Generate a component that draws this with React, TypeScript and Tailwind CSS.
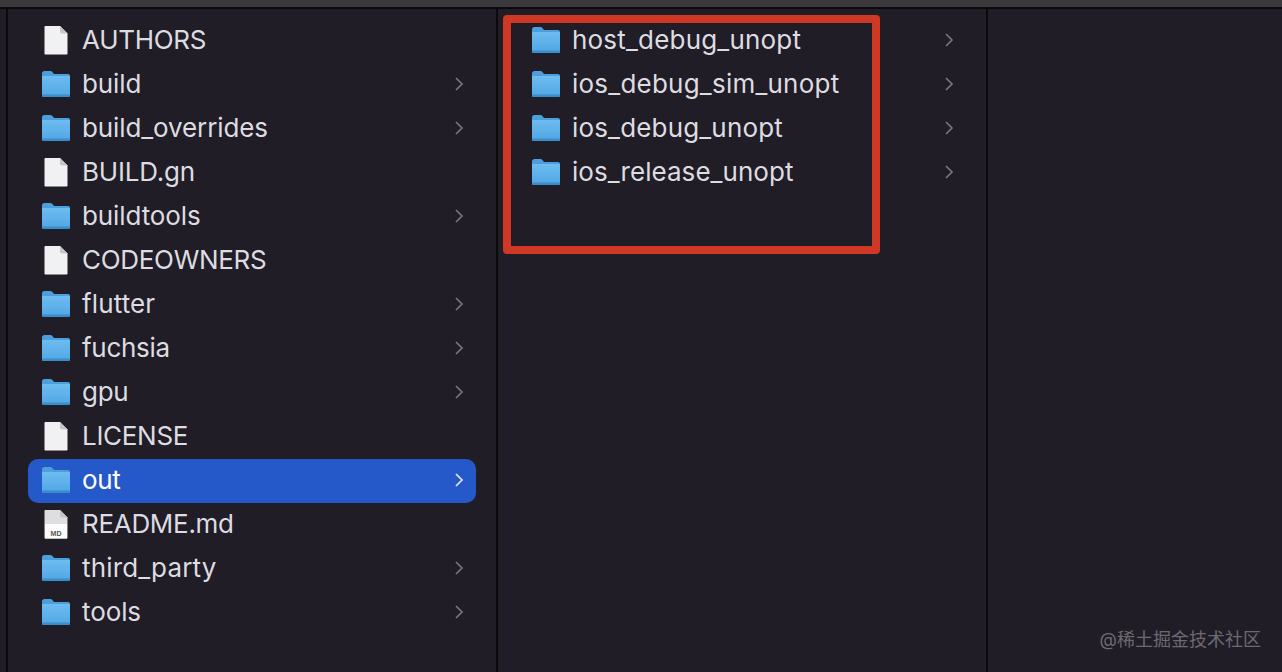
import React from "react";

const font = { fontFamily: '"Inter", "Noto Sans CJK SC", sans-serif' };

function Folder({ id }: { id: string }) {
  return (
    <svg width="30" height="28" viewBox="0 0 30 28" className="shrink-0">
      <defs>
        <linearGradient id={id} x1="0" y1="0" x2="0" y2="1">
          <stop offset="0" stopColor="#6ebcf0" />
          <stop offset="1" stopColor="#4fa6e4" />
        </linearGradient>
      </defs>
      <path d="M1 3.500C1 2 2 1 3.500 1h5.500c1.200 0 1.800.4 2.600 1.200L13 4h14c1.200 0 2 .8 2 2v19c0 1.200-.8 2-2 2H3c-1.200 0-2-.8-2-2z" fill="#4c9fdc" />
      <path d="M1 7c0-.6.4-1 1-1h26c.6 0 1 .4 1 1v18c0 1.200-.8 2-2 2H3c-1.200 0-2-.8-2-2z" fill={`url(#${id})`} />
      <rect x="1" y="24.500" width="28" height="2.500" rx="1.200" fill="#3a8ccb" />
    </svg>
  );
}

function Doc({ md }: { md?: boolean }) {
  return (
    <svg width="30" height="30" viewBox="0 0 30 30" className="shrink-0">
      <path d="M3.500 2C3.500 1.400 4 1 4.500 1H19l7.500 7.500v20c0 .6-.5 1-1 1H4.500c-.6 0-1-.4-1-1z" fill={md ? "#dedee0" : "#f1f1f3"} />
      {md && <rect x="4" y="15" width="22" height="14.500" fill="#fbfbfb" />}
      <path d="M19 1V6.500c0 1.200.8 2 2 2h5.500z" fill="#c6c6ca" />
      {md && (
        <text x="15" y="27" textAnchor="middle" fontSize="7" fontWeight="700" fill="#555" fontFamily="Liberation Sans, sans-serif">
          MD
        </text>
      )}
    </svg>
  );
}

function Chevron({ white }: { white?: boolean }) {
  return (
    <svg width="10" height="16" viewBox="0 0 10 16" className="shrink-0">
      <path d="M2 2l6 6-6 6" fill="none" stroke={white ? "#e6e9f5" : "#77767c"} strokeWidth="1.700" />
    </svg>
  );
}

type Item = { name: string; kind: "folder" | "doc" | "md"; selected?: boolean; track: string };

const first: Item[] = [
  { name: "AUTHORS", kind: "doc", track: "tracking-[-0.3px]" },
  { name: "build", kind: "folder", track: "tracking-[-0.1px]" },
  { name: "build_overrides", kind: "folder", track: "tracking-[-0.1px]" },
  { name: "BUILD.gn", kind: "doc", track: "tracking-[-0.2px]" },
  { name: "buildtools", kind: "folder", track: "tracking-[-0.1px]" },
  { name: "CODEOWNERS", kind: "doc", track: "tracking-[-0.3px]" },
  { name: "flutter", kind: "folder", track: "tracking-[0.13px]" },
  { name: "fuchsia", kind: "folder", track: "tracking-[-0.3px]" },
  { name: "gpu", kind: "folder", track: "tracking-[-0.3px]" },
  { name: "LICENSE", kind: "doc", track: "tracking-[-0.3px]" },
  { name: "out", kind: "folder", selected: true, track: "tracking-[-0.3px]" },
  { name: "README.md", kind: "md", track: "tracking-[-0.3px]" },
  { name: "third_party", kind: "folder", track: "tracking-[0.15px]" },
  { name: "tools", kind: "folder", track: "tracking-[-0.1px]" },
];

const second: Item[] = [
  { name: "host_debug_unopt", kind: "folder", track: "tracking-[0.2px]" },
  { name: "ios_debug_sim_unopt", kind: "folder", track: "tracking-[0.23px]" },
  { name: "ios_debug_unopt", kind: "folder", track: "tracking-[0.17px]" },
  { name: "ios_release_unopt", kind: "folder", track: "tracking-[0.05px]" },
];

function Row({ item, id }: { item: Item; id: string }) {
  return (
    <div
      className={`flex h-[44px] items-center rounded-[10px] pl-[13px] pr-[12px] ${
        item.selected ? "mt-[1px] mb-[-1px] pb-[2px] bg-[#2558c8] text-white" : "text-[#dddce0]"
      }`}
    >
      <span className="flex w-[30px] items-center justify-center">
        {item.kind === "folder" ? <Folder id={id} /> : <Doc md={item.kind === "md"} />}
      </span>
      <span className={`ml-[11px] flex-1 text-[26px] leading-[42px] ${item.track}`}>{item.name}</span>
      {item.kind === "folder" && <Chevron white={item.selected} />}
    </div>
  );
}

export default function App() {
  return (
    <div className="relative flex h-[672px] w-[1282px] flex-col overflow-hidden bg-[#201d26]" style={font}>
      <div className="h-[7px] shrink-0 bg-[#3b393d]" />
      <div className="h-[2px] shrink-0 bg-[#0a0a0b]" />
      <div className="flex min-h-0 flex-1">
        <div className="w-[6px] shrink-0" />
        <div className="w-[2px] shrink-0 bg-[#0a0a0b]" />
        <div className="flex w-[488px] shrink-0 flex-col px-[20px] pt-[9px]">
          {first.map((it, i) => (
            <Row key={it.name} item={it} id={`a${i}`} />
          ))}
        </div>
        <div className="w-[2px] shrink-0 bg-[#0a0a0b]" />
        <div className="flex w-[488px] shrink-0 flex-col pl-[20px] pr-[20px] pt-[9px]">
          {second.map((it, i) => (
            <Row key={it.name} item={it} id={`b${i}`} />
          ))}
        </div>
        <div className="w-[2px] shrink-0 bg-[#0a0a0b]" />
        <div className="flex-1" />
      </div>
      <div className="absolute left-[503px] top-[15px] h-[239px] w-[377px] rounded-[4px] border-[8px] border-[#cf3824]" />
      <div className="absolute right-[21px] top-[629px] text-[18px] leading-[22px] text-[#6c6a71]">@稀土掘金技术社区</div>
    </div>
  );
}
